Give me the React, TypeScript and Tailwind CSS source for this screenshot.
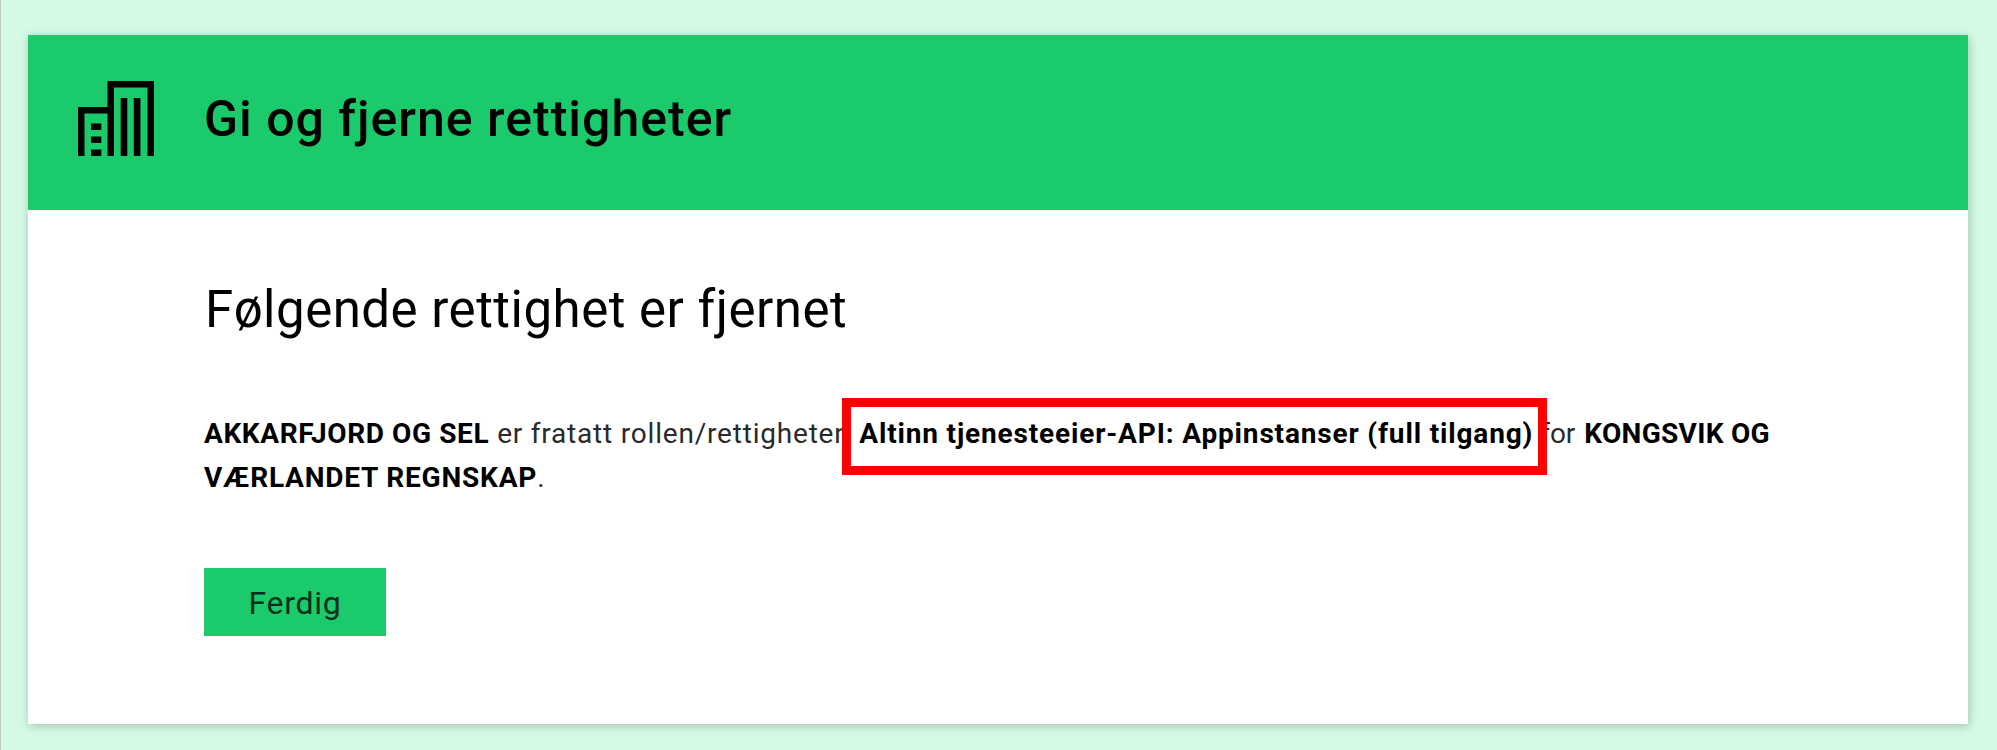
function BuildingsIcon() {
  return (
    <svg className="block h-[76px] w-[76px] shrink-0" viewBox="0 0 76 76" fill="#000">
      <path d="M0 75V26h29.5V0H76v75h-6.5V6.5H36V75h-6.5V32.5H6.5V75Z" />
      <path d="M42.7 17h6.6v58h-6.6zM55.8 17h6.6v58h-6.6z" />
      <path d="M13 42.5h10.3v6.6H13zM13 55.5h10.3v6.6H13zM13 68.5h10.3V75H13z" />
    </svg>
  );
}

export default function App() {
  return (
    <div className="h-[750px] w-full overflow-hidden border-l border-[#c4c4c4] bg-[#d4f9e4] pt-[35px] pr-[29px] pl-[27px] font-['Roboto',sans-serif] text-black">
      <main className="h-[689px] w-full bg-white shadow-[1px_2px_9px_rgba(0,0,0,0.22)]">
        <header className="flex h-[175px] items-start bg-[#1aca6b] pl-[50px]">
          <div className="w-[126px] shrink-0 pt-[46px]">
            <BuildingsIcon />
          </div>
          <h1 className="pt-[54px] text-[50px] leading-[60px] font-medium tracking-[1px] whitespace-nowrap">
            Gi og fjerne rettigheter
          </h1>
        </header>
        <section className="pt-[70px] pr-[120px] pl-[176px]">
          <h2 className="pl-px text-[51px] leading-[60px] font-normal tracking-[0.5px] whitespace-nowrap">
            Følgende rettighet er fjernet
          </h2>
          <div className="relative mt-[72px] text-[28px] leading-[44px] whitespace-nowrap text-[#2a2a2a]">
            <p>
              <b className="tracking-[0.6px] text-black">AKKARFJORD OG SEL</b>{" "}
              <span className="ml-px tracking-[0.8px]">er fratatt rollen/rettigheten </span>
              <b className="ml-px tracking-[0.84px] text-black">Altinn tjenesteeier-API: Appinstanser (full tilgang)</b>{" "}
              <span>for</span>{" "}
              <b className="ml-[2px] tracking-[0.3px] text-black">KONGSVIK OG</b>
              <br />
              <b className="tracking-[0.8px] text-black">VÆRLANDET REGNSKAP</b>.
            </p>
            <div className="absolute top-[-14px] left-[638px] h-[77px] w-[705px] border-[9px] border-[#ff0000]" />
          </div>
          <button className="mt-[68px] flex h-[68px] w-[182px] items-center justify-center bg-[#1aca6b] pt-px text-[32px] tracking-[0.7px] text-[#06301b]">
            Ferdig
          </button>
        </section>
      </main>
    </div>
  );
}
